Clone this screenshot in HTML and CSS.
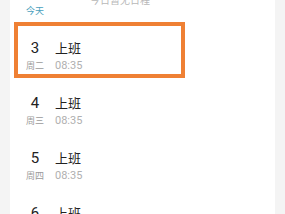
FILE: index.html
```html
<!DOCTYPE html>
<html lang="zh">
<head>
<meta charset="utf-8">
<link rel="stylesheet" href="styles.css">
</head>
<body>
<div class="page">
  <div class="card">
    <div class="empty">今日暂无日程</div>
    <div class="today">今天</div>
    <ul class="list">
      <li class="row">
        <div class="date"><div class="day">3</div><div class="week">周二</div></div>
        <div class="info"><div class="title">上班</div><div class="time">08:35</div></div>
        <div class="highlight"></div>
      </li>
      <li class="row">
        <div class="date"><div class="day">4</div><div class="week">周三</div></div>
        <div class="info"><div class="title">上班</div><div class="time">08:35</div></div>
      </li>
      <li class="row">
        <div class="date"><div class="day">5</div><div class="week">周四</div></div>
        <div class="info"><div class="title">上班</div><div class="time">08:35</div></div>
      </li>
      <li class="row">
        <div class="date"><div class="day">6</div><div class="week">周五</div></div>
        <div class="info"><div class="title">上班</div><div class="time">08:35</div></div>
      </li>
    </ul>
  </div>
</div>
</body>
</html>
```
FILE: styles.css
```css
html, body {
  margin: 0;
  padding: 0;
  height: 214px;
  overflow: hidden;
  background: #f4f4f4;
  font-family: Roboto, "Noto Sans CJK SC", sans-serif;
}
.page {
  padding: 0 10px;
  height: 214px;
}
.card {
  background: #fff;
  height: 100%;
  overflow: hidden;
}
.empty {
  margin-top: -4px;
  padding-left: 80px;
  font-size: 10px;
  line-height: 10px;
  color: #b8b8b8;
}
.today {
  padding-left: 16px;
  font-size: 9px;
  line-height: 10px;
  color: #4aa0bd;
}
.list {
  list-style: none;
  margin: 0;
  padding: 6px 0 0;
}
.row {
  position: relative;
  display: flex;
  height: 55px;
  box-sizing: border-box;
  padding: 18px 0 0 16px;
}
.date {
  width: 18px;
  margin-right: 11px;
  text-align: center;
}
.day {
  font-size: 15px;
  line-height: 17px;
  color: #222;
}
.week {
  margin-top: 2.5px;
  font-size: 9px;
  line-height: 12px;
  color: #9a9a9a;
}
.title {
  font-size: 13px;
  line-height: 17px;
  color: #222;
}
.time {
  margin-top: 3px;
  font-size: 11px;
  line-height: 12px;
  color: #b0b0b0;
}
.highlight {
  position: absolute;
  left: 4px;
  top: 0;
  width: 171px;
  height: 56px;
  box-sizing: border-box;
  border: 4px solid #ef8034;
}
```
